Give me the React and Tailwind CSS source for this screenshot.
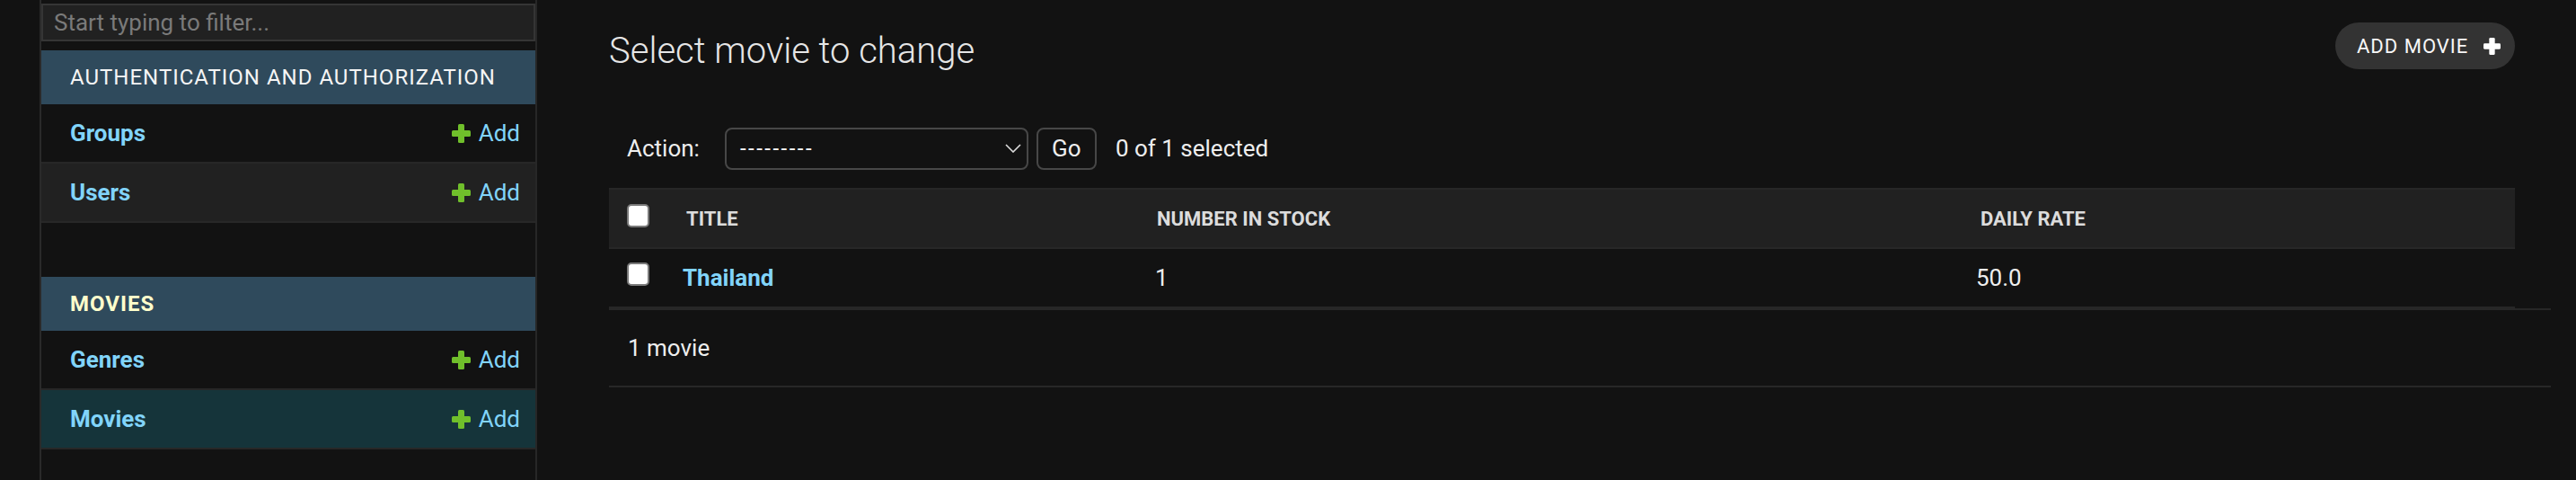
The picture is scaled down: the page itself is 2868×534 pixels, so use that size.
import React from "react";

function PlusIcon({ color, size = 21 }) {
  return (
    <svg width={size} height={size} viewBox="0 0 21 21">
      <rect x="7" y="0" width="7" height="21" rx="1.5" fill={color} />
      <rect x="0" y="7" width="21" height="7" rx="1.5" fill={color} />
    </svg>
  );
}

function Check() {
  return <span className="block w-[25px] h-[26px] rounded-[5px] bg-white border-2 border-[#7a7a7a]" />;
}

function NavRow({ name, bg = "bg-[#121212]" }) {
  return (
    <div className={`flex items-center justify-between h-[66px] border-b-2 border-[#272727] pl-[32px] pr-[17px] ${bg}`}>
      <span className="text-[26px] font-bold text-[#81d4fa]">{name}</span>
      <span className="flex items-center gap-[9px] text-[26px] text-[#81d4fa]">
        <PlusIcon color="#70bf2b" />
        Add
      </span>
    </div>
  );
}

function Caption({ children, current }) {
  return (
    <div
      className={`h-[60px] flex items-center pl-[32px] bg-[#2f4a5c] text-[24px] uppercase tracking-[1px] ${
        current ? "text-[#ffffcc] font-bold" : "text-[#f5f5f5]"
      }`}
    >
      {children}
    </div>
  );
}

export default function App() {
  return (
    <div className="flex w-[2868px] h-[534px] overflow-hidden bg-[#121212] text-[#eeeeee] [font-family:Roboto,sans-serif]">
      {/* sidebar toggle strip */}
      <div className="w-[46px] shrink-0 border-r-2 border-[#2a2a2a]" />

      {/* nav sidebar */}
      <nav className="w-[552px] shrink-0 border-r-2 border-[#272727]">
        <div className="pt-[4px]">
          <div className="h-[42px] flex items-center px-[12px] bg-[#212121] border-2 border-[#353535] text-[26px] text-[#7a7a7a]">
            Start typing to filter...
          </div>
        </div>
        <div className="mt-[10px]">
          <Caption>Authentication and Authorization</Caption>
          <NavRow name="Groups" />
          <NavRow name="Users" bg="bg-[#212121]" />
        </div>
        <div className="mt-[60px]">
          <Caption current>Movies</Caption>
          <NavRow name="Genres" />
          <NavRow name="Movies" bg="bg-[#15343a]" />
        </div>
      </nav>

      {/* content */}
      <main className="flex-1 pl-[80px] pr-[68px]">
        <div className="flex justify-between items-start pt-[25px] h-[121px]">
          <h1 className="mt-[7px] text-[40px] leading-[50px] font-light text-[#e6e6e6]">Select movie to change</h1>
          <div className="h-[52px] w-[200px] rounded-full bg-[#333333] flex items-center pl-[24px] gap-[17px] text-[22px] tracking-[1px] text-[#f7f7f7] uppercase">
            Add movie
            <PlusIcon color="#ffffff" size={19} />
          </div>
        </div>

        <div className="flex items-center h-[88px] px-[20px] text-[26px]">
          <span className="mr-[28px]">Action:</span>
          <div className="w-[338px] h-[47px] rounded-[8px] border-2 border-[#474747] flex items-center justify-between pl-[15px] pr-[6px]">
            <span className="text-[24px] tracking-[2.5px] text-white">---------</span>
            <svg width="18" height="10" viewBox="0 0 18 10">
              <polyline points="1,1 9,9 17,1" fill="none" stroke="#dddddd" strokeWidth="1.6" />
            </svg>
          </div>
          <div className="ml-[9px] w-[67px] h-[47px] rounded-[8px] border-2 border-[#474747] flex items-center justify-center">
            Go
          </div>
          <span className="ml-[21px]">0 of 1 selected</span>
        </div>

        <div className="grid grid-cols-[66px_526px_914px_1fr] h-[68px] items-center bg-[#212121] border-y-2 border-[#272727] text-[22px] font-bold uppercase text-[#dcdcdc]">
          <div className="pl-[20px] mb-[6px]"><Check /></div>
          <span className="pl-[20px]">Title</span>
          <span className="pl-[18px]">Number in stock</span>
          <span className="pl-[21px]">Daily rate</span>
        </div>
        <div className="grid grid-cols-[66px_526px_914px_1fr] h-[66px] items-center border-b-2 border-[#272727] text-[26px]">
          <div className="pl-[20px] mb-[8px]"><Check /></div>
          <span className="pl-[16px] font-bold text-[#81d4fa]">Thailand</span>
          <span className="pl-[16px]">1</span>
          <span className="pl-[16px]">50.0</span>
        </div>

        <div className="mr-[-40px] h-[88px] flex items-center pl-[21px] border-y-2 border-[#272727] text-[26px]">
          1 movie
        </div>
      </main>
    </div>
  );
}
